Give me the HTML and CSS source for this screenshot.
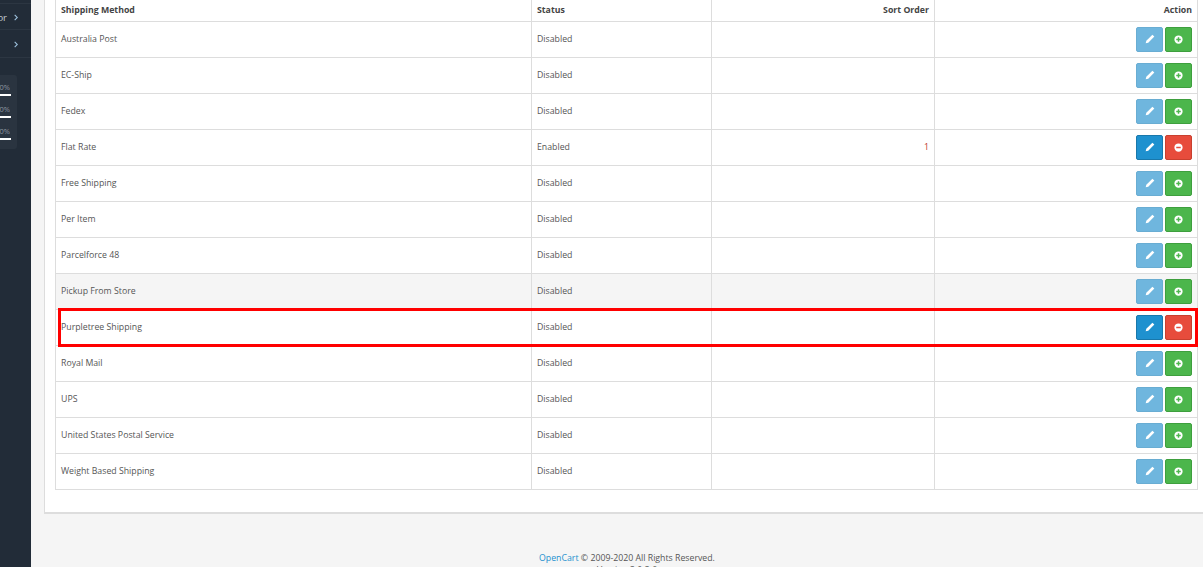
FILE: index.html
```html
<!DOCTYPE html>
<html lang="en">
<head>
<meta charset="utf-8">
<title>Shipping</title>
<link rel="stylesheet" href="styles.css">
</head>
<body>
<svg class="defs" width="0" height="0" aria-hidden="true">
  <symbol id="pencil" viewBox="0 0 12 12"><path d="M8.9.8 11.2 3.1 3.9 10.4.8 11.2 1.6 8.1Z"/></symbol>
  <symbol id="plus" viewBox="0 0 12 12"><path fill-rule="evenodd" d="M6 .5a5.5 5.5 0 1 1 0 11 5.5 5.5 0 0 1 0-11ZM5 3v2H3v2h2v2h2V7h2V5H7V3Z"/></symbol>
  <symbol id="minus" viewBox="0 0 12 12"><path fill-rule="evenodd" d="M6 .5a5.5 5.5 0 1 1 0 11 5.5 5.5 0 0 1 0-11ZM3 5v2h6V5Z"/></symbol>
  <symbol id="chev" viewBox="0 0 6 10"><path d="M1 1l4 4-4 4" fill="none" stroke="currentColor" stroke-width="1.6"/></symbol>
</svg>
<div class="app">
  <aside class="sidebar">
    <div class="nav-item nav-first"><span class="nav-label">Vendor</span><svg class="chev"><use href="#chev"/></svg></div>
    <div class="nav-item"><span class="nav-label"></span><svg class="chev"><use href="#chev"/></svg></div>
    <div class="stats">
      <div class="stat"><span class="stat-text">0%</span><div class="stat-bar"></div></div>
      <div class="stat"><span class="stat-text">0%</span><div class="stat-bar"></div></div>
      <div class="stat"><span class="stat-text">0%</span><div class="stat-bar"></div></div>
    </div>
  </aside>
  <main class="main">
    <div class="page">
      <section class="panel">
        <div class="table-wrap">
          <table class="list">
            <thead>
              <tr><th class="c-name">Shipping Method</th><th class="c-status">Status</th><th class="c-sort">Sort Order</th><th class="c-action">Action</th></tr>
            </thead>
            <tbody>
              <tr><td>Australia Post</td><td>Disabled</td><td class="num"></td><td class="act"><a class="btn edit off"><svg class="ico"><use href="#pencil"/></svg></a><a class="btn add"><svg class="ico sm"><use href="#plus"/></svg></a></td></tr>
              <tr><td>EC-Ship</td><td>Disabled</td><td class="num"></td><td class="act"><a class="btn edit off"><svg class="ico"><use href="#pencil"/></svg></a><a class="btn add"><svg class="ico sm"><use href="#plus"/></svg></a></td></tr>
              <tr><td>Fedex</td><td>Disabled</td><td class="num"></td><td class="act"><a class="btn edit off"><svg class="ico"><use href="#pencil"/></svg></a><a class="btn add"><svg class="ico sm"><use href="#plus"/></svg></a></td></tr>
              <tr><td>Flat Rate</td><td>Enabled</td><td class="num">1</td><td class="act"><a class="btn edit"><svg class="ico"><use href="#pencil"/></svg></a><a class="btn del"><svg class="ico sm"><use href="#minus"/></svg></a></td></tr>
              <tr><td>Free Shipping</td><td>Disabled</td><td class="num"></td><td class="act"><a class="btn edit off"><svg class="ico"><use href="#pencil"/></svg></a><a class="btn add"><svg class="ico sm"><use href="#plus"/></svg></a></td></tr>
              <tr><td>Per Item</td><td>Disabled</td><td class="num"></td><td class="act"><a class="btn edit off"><svg class="ico"><use href="#pencil"/></svg></a><a class="btn add"><svg class="ico sm"><use href="#plus"/></svg></a></td></tr>
              <tr><td>Parcelforce 48</td><td>Disabled</td><td class="num"></td><td class="act"><a class="btn edit off"><svg class="ico"><use href="#pencil"/></svg></a><a class="btn add"><svg class="ico sm"><use href="#plus"/></svg></a></td></tr>
              <tr class="hover"><td>Pickup From Store</td><td>Disabled</td><td class="num"></td><td class="act"><a class="btn edit off"><svg class="ico"><use href="#pencil"/></svg></a><a class="btn add"><svg class="ico sm"><use href="#plus"/></svg></a></td></tr>
              <tr><td>Purpletree Shipping</td><td>Disabled</td><td class="num"></td><td class="act"><a class="btn edit"><svg class="ico"><use href="#pencil"/></svg></a><a class="btn del"><svg class="ico sm"><use href="#minus"/></svg></a></td></tr>
              <tr><td>Royal Mail</td><td>Disabled</td><td class="num"></td><td class="act"><a class="btn edit off"><svg class="ico"><use href="#pencil"/></svg></a><a class="btn add"><svg class="ico sm"><use href="#plus"/></svg></a></td></tr>
              <tr><td>UPS</td><td>Disabled</td><td class="num"></td><td class="act"><a class="btn edit off"><svg class="ico"><use href="#pencil"/></svg></a><a class="btn add"><svg class="ico sm"><use href="#plus"/></svg></a></td></tr>
              <tr><td>United States Postal Service</td><td>Disabled</td><td class="num"></td><td class="act"><a class="btn edit off"><svg class="ico"><use href="#pencil"/></svg></a><a class="btn add"><svg class="ico sm"><use href="#plus"/></svg></a></td></tr>
              <tr><td>Weight Based Shipping</td><td>Disabled</td><td class="num"></td><td class="act"><a class="btn edit off"><svg class="ico"><use href="#pencil"/></svg></a><a class="btn add"><svg class="ico sm"><use href="#plus"/></svg></a></td></tr>
            </tbody>
          </table>
          <div class="highlight"></div>
        </div>
      </section>
      <footer class="footer">
        <p><a class="link">OpenCart</a> © 2009-2020 All Rights Reserved.</p>
        <p>Version 3.0.3.6</p>
      </footer>
    </div>
  </main>
</div>
</body>
</html>
```
FILE: styles.css
```css
* { box-sizing: border-box; }
html, body { margin: 0; height: 567px; overflow: hidden; }
body { font-family: "Open Sans", "Liberation Sans", sans-serif; font-size: 8.75px; color: #555; background: #f5f5f5; }
.defs { position: absolute; }
.app { display: flex; height: 567px; }

.sidebar { flex: 0 0 31px; width: 31px; background: #222c38; overflow: hidden; padding-top: 3px; }
.nav-item { height: 26px; padding-top: 1px; border-top: 1px solid #2c3642; display: flex; align-items: center; justify-content: flex-end; padding-right: 13px; color: #c4ccd4; gap: 7px; white-space: nowrap; font-size: 9.5px; }
.nav-item + .nav-item { height: 29px; }
.chev { width: 4px; height: 7px; color: #9fc3df; flex: none; }
.nav-item:nth-child(2) { border-bottom: 1px solid #2c3642; }
.stats { width: 17px; margin-top: 17px; height: 74px; background: #2a3440; border-radius: 0 3px 3px 0; padding-top: 7px; display: flex; flex-direction: column; gap: 8px; }
.stat { height: 14px; display: flex; flex-direction: column; align-items: flex-end; padding-right: 6px; }
.stat-text { font-size: 7.5px; line-height: 10px; margin-right: 1px; color: #8d96a0; width: 11px; overflow: hidden; white-space: nowrap; text-align: right; }
.stat-bar { height: 2px; width: 11px; background: #fff; margin-top: 2px; }

.main { flex: 1; min-width: 0; overflow: hidden; }
.page { width: 1192px; margin-top: -10px; padding-left: 13px; }
.panel { background: #fff; border: 1px solid #ddd; border-bottom-width: 2px; border-right: 0; height: 524px; padding: 0 0 0 10px; }

.table-wrap { position: relative; width: 1143px; }
.list { border-collapse: collapse; table-layout: fixed; width: 1143px; }
.list th, .list td { border: 1px solid #ddd; padding: 0 5px; height: 36px; vertical-align: middle; }
.list th { height: 30px; font-weight: 700; color: #444; text-align: left; border-top: 0; vertical-align: bottom; padding-bottom: 5px; line-height: 12px; }
.c-name { width: 476px; }
.c-status { width: 180px; }
.c-sort { width: 223px; text-align: right !important; }
.c-action { text-align: right !important; }
.num { text-align: right; color: #c0392b; }
.act { text-align: right; font-size: 0; }
.hover td { background: #f5f5f5; }

.btn { display: inline-flex; align-items: center; justify-content: center; width: 27px; height: 25px; border-radius: 2px; border: 1px solid; margin-left: 2px; vertical-align: middle; }
.ico { width: 10px; height: 10px; fill: #fff; }
.ico.sm { width: 9px; height: 9px; }
.edit { background: #1e91cf; border-color: #1978ab; }
.edit.off { background: #6fb6de; border-color: #69add3; }
.add { background: #4cb64c; border-color: #3e9f3e; }
.del { background: #e74c3c; border-color: #c9402f; }

.highlight { position: absolute; left: 3px; top: 317px; width: 1140px; height: 39px; border: 3px solid #f00; }

.footer { text-align: center; margin-right: 13px; padding-top: 38px; line-height: 12px; color: #555; }
.footer p { margin: 0; }
.link { color: #1e91cf; }
```
